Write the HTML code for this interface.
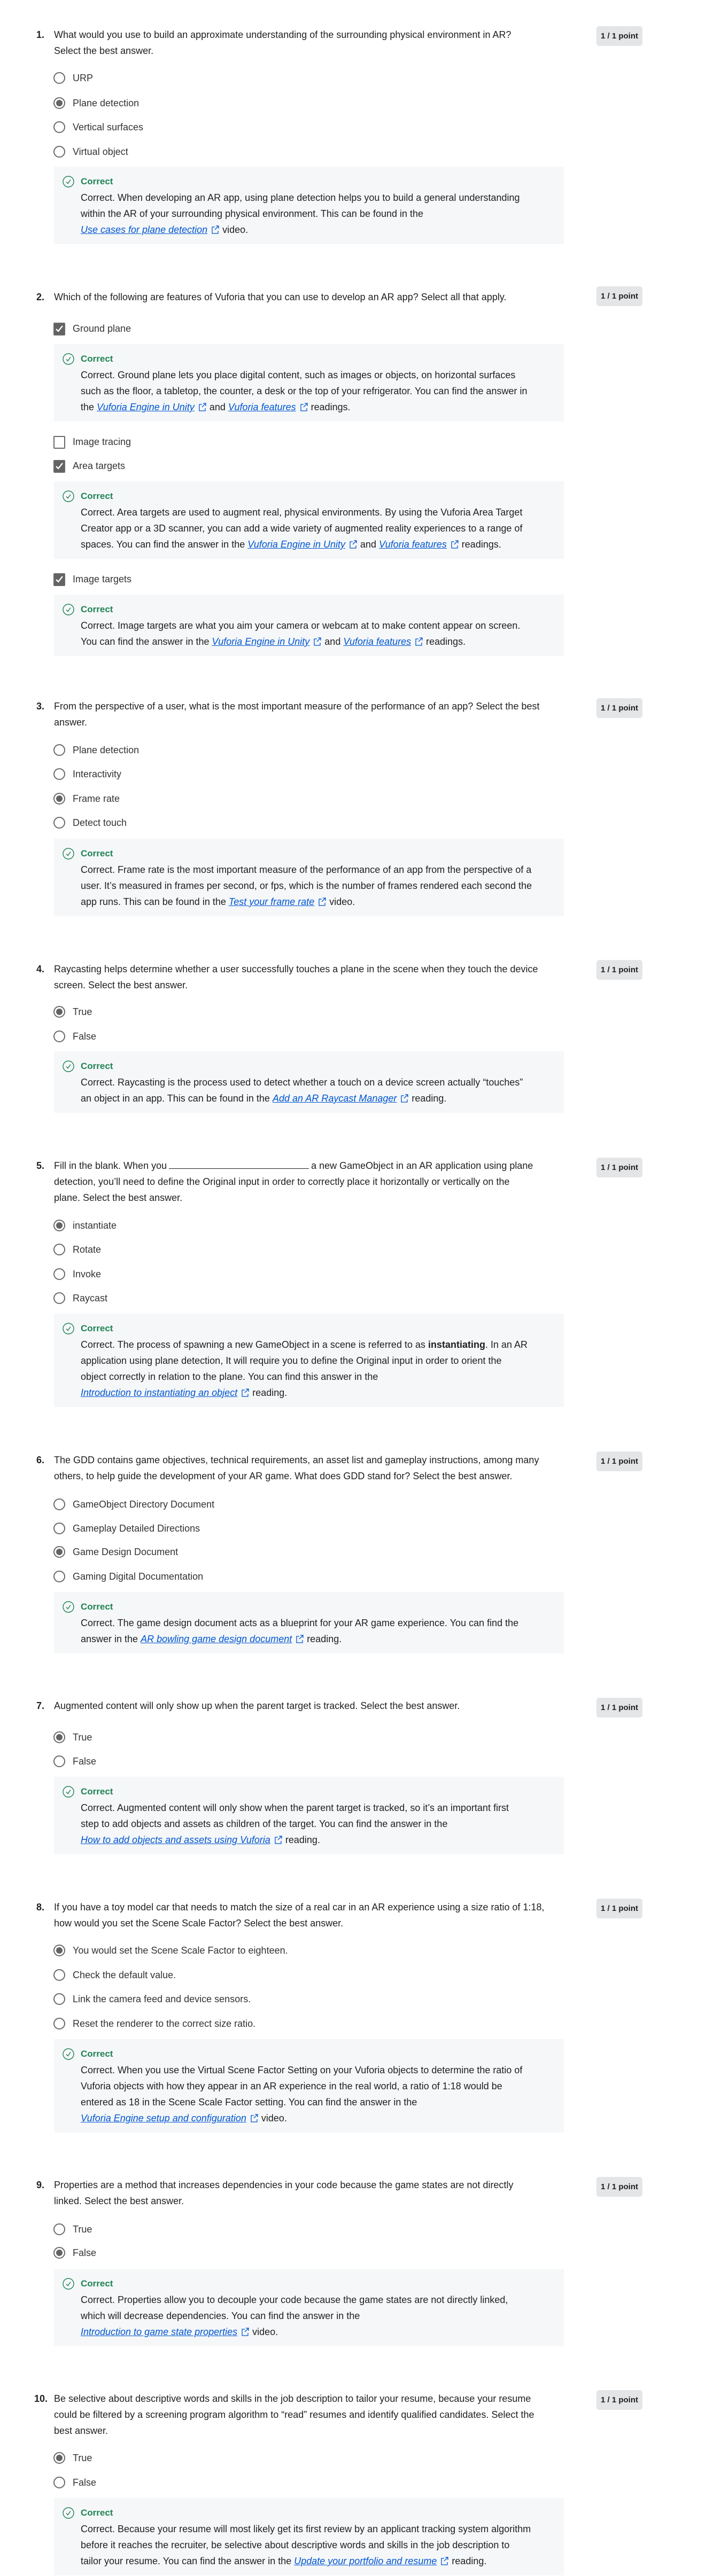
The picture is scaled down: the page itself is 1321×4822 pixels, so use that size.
<!DOCTYPE html>
<html><head><meta charset="utf-8"><style>
body{margin:0;width:1321px;height:4822px;position:relative;background:#fff;font-family:"Liberation Sans",sans-serif;color:#1f1f1f;font-size:18px;overflow:hidden}
.n{position:absolute;left:68px;font-weight:bold;line-height:30px;font-size:18px}
.q{position:absolute;left:101px;line-height:30px;white-space:nowrap;font-size:18px}
.b{position:absolute;left:1116px;width:86px;height:37px;background:#e3e5e7;border-radius:5px;font-weight:bold;font-size:15px;line-height:37px;text-align:center;color:#1f1f1f}
.o{position:absolute;left:100px;line-height:30px;padding-left:36px;white-space:nowrap;color:#333}
.r{position:absolute;left:0;top:4px;width:18px;height:18px;border:2px solid #6a6a6a;border-radius:50%;background:#fff}
.r.s::after{content:"";position:absolute;left:3px;top:3px;width:12px;height:12px;border-radius:50%;background:#636363}
.c{position:absolute;left:0;top:4px;width:18px;height:20px;border:2px solid #6a6a6a;border-radius:2px;background:#fff}
.c.s{background:#636363}
.c.s svg{position:absolute;left:1px;top:2px}
.fb{position:absolute;left:101px;width:904px;background:#f5f7f8;padding:13px 0 0 50px}
.ct{position:relative;color:#1f8354;font-weight:bold;font-size:17px;line-height:30px}
.ct svg{position:absolute;left:-34px;top:4px}
.ft{line-height:30px;white-space:nowrap;color:#1f1f1f}
a{color:#0056d2;font-style:italic;text-decoration:underline}
.x{display:inline-block;margin:0 6px 0 8px;vertical-align:-2px}
.blank{display:inline-block;width:262px;border-bottom:1px solid #1f1f1f;height:18px;margin:0 4px}
</style></head><body>

<!-- icons reused inline -->

<!-- Q1 -->
<div class="n" style="top:50px">1.</div>
<div class="q" style="top:50px">What would you use to build an approximate understanding of the surrounding physical environment in AR?<br>Select the best answer.</div>
<div class="b" style="top:49px">1 / 1 point</div>
<div class="o" style="top:131px"><i class="r"></i>URP</div>
<div class="o" style="top:178px"><i class="r s"></i>Plane detection</div>
<div class="o" style="top:223px"><i class="r"></i>Vertical surfaces</div>
<div class="o" style="top:269px"><i class="r"></i>Virtual object</div>
<div class="fb" style="top:312px;height:132px"><div class="ct"><svg width="22" height="22" viewBox="0 0 22 22"><circle cx="11" cy="11" r="10" fill="none" stroke="#1f8354" stroke-width="1.4"/><path d="M7 11.5l3 3 5-7" fill="none" stroke="#1f8354" stroke-width="1.4"/></svg>Correct</div><div class="ft">Correct. When developing an AR app, using plane detection helps you to build a general understanding<br>within the AR of your surrounding physical environment. This can be found in the<br><a>Use cases for plane detection</a><svg class="x" width="14" height="16" viewBox="0 0 14 16"><path d="M6 3H1v12h11v-5M8 1h5v5M13 1L6 8" fill="none" stroke="#0056d2" stroke-width="1.3"/></svg>video.</div></div>

<!-- Q2 -->
<div class="n" style="top:541px">2.</div>
<div class="q" style="top:541px">Which of the following are features of Vuforia that you can use to develop an AR app? Select all that apply.</div>
<div class="b" style="top:536px">1 / 1 point</div>
<div class="o" style="top:600px"><i class="c s"><svg width="16" height="16" viewBox="0 0 16 16"><path d="M2 8l4 4 8-10" fill="none" stroke="#fff" stroke-width="2.4"/></svg></i>Ground plane</div>
<div class="fb" style="top:644px;height:132px"><div class="ct"><svg width="22" height="22" viewBox="0 0 22 22"><circle cx="11" cy="11" r="10" fill="none" stroke="#1f8354" stroke-width="1.4"/><path d="M7 11.5l3 3 5-7" fill="none" stroke="#1f8354" stroke-width="1.4"/></svg>Correct</div><div class="ft">Correct. Ground plane lets you place digital content, such as images or objects, on horizontal surfaces<br>such as the floor, a tabletop, the counter, a desk or the top of your refrigerator. You can find the answer in<br>the <a>Vuforia Engine in Unity</a><svg class="x" width="14" height="16" viewBox="0 0 14 16"><path d="M6 3H1v12h11v-5M8 1h5v5M13 1L6 8" fill="none" stroke="#0056d2" stroke-width="1.3"/></svg>and <a>Vuforia features</a><svg class="x" width="14" height="16" viewBox="0 0 14 16"><path d="M6 3H1v12h11v-5M8 1h5v5M13 1L6 8" fill="none" stroke="#0056d2" stroke-width="1.3"/></svg>readings.</div></div>
<div class="o" style="top:812px"><i class="c"></i>Image tracing</div>
<div class="o" style="top:857px"><i class="c s"><svg width="16" height="16" viewBox="0 0 16 16"><path d="M2 8l4 4 8-10" fill="none" stroke="#fff" stroke-width="2.4"/></svg></i>Area targets</div>
<div class="fb" style="top:901px;height:132px"><div class="ct"><svg width="22" height="22" viewBox="0 0 22 22"><circle cx="11" cy="11" r="10" fill="none" stroke="#1f8354" stroke-width="1.4"/><path d="M7 11.5l3 3 5-7" fill="none" stroke="#1f8354" stroke-width="1.4"/></svg>Correct</div><div class="ft">Correct. Area targets are used to augment real, physical environments. By using the Vuforia Area Target<br>Creator app or a 3D scanner, you can add a wide variety of augmented reality experiences to a range of<br>spaces. You can find the answer in the <a>Vuforia Engine in Unity</a><svg class="x" width="14" height="16" viewBox="0 0 14 16"><path d="M6 3H1v12h11v-5M8 1h5v5M13 1L6 8" fill="none" stroke="#0056d2" stroke-width="1.3"/></svg>and <a>Vuforia features</a><svg class="x" width="14" height="16" viewBox="0 0 14 16"><path d="M6 3H1v12h11v-5M8 1h5v5M13 1L6 8" fill="none" stroke="#0056d2" stroke-width="1.3"/></svg>readings.</div></div>
<div class="o" style="top:1069px"><i class="c s"><svg width="16" height="16" viewBox="0 0 16 16"><path d="M2 8l4 4 8-10" fill="none" stroke="#fff" stroke-width="2.4"/></svg></i>Image targets</div>
<div class="fb" style="top:1113px;height:102px"><div class="ct"><svg width="22" height="22" viewBox="0 0 22 22"><circle cx="11" cy="11" r="10" fill="none" stroke="#1f8354" stroke-width="1.4"/><path d="M7 11.5l3 3 5-7" fill="none" stroke="#1f8354" stroke-width="1.4"/></svg>Correct</div><div class="ft">Correct. Image targets are what you aim your camera or webcam at to make content appear on screen.<br>You can find the answer in the <a>Vuforia Engine in Unity</a><svg class="x" width="14" height="16" viewBox="0 0 14 16"><path d="M6 3H1v12h11v-5M8 1h5v5M13 1L6 8" fill="none" stroke="#0056d2" stroke-width="1.3"/></svg>and <a>Vuforia features</a><svg class="x" width="14" height="16" viewBox="0 0 14 16"><path d="M6 3H1v12h11v-5M8 1h5v5M13 1L6 8" fill="none" stroke="#0056d2" stroke-width="1.3"/></svg>readings.</div></div>

<!-- Q3 -->
<div class="n" style="top:1307px">3.</div>
<div class="q" style="top:1307px">From the perspective of a user, what is the most important measure of the performance of an app? Select the best<br>answer.</div>
<div class="b" style="top:1307px">1 / 1 point</div>
<div class="o" style="top:1389px"><i class="r"></i>Plane detection</div>
<div class="o" style="top:1434px"><i class="r"></i>Interactivity</div>
<div class="o" style="top:1480px"><i class="r s"></i>Frame rate</div>
<div class="o" style="top:1525px"><i class="r"></i>Detect touch</div>
<div class="fb" style="top:1570px;height:132px"><div class="ct"><svg width="22" height="22" viewBox="0 0 22 22"><circle cx="11" cy="11" r="10" fill="none" stroke="#1f8354" stroke-width="1.4"/><path d="M7 11.5l3 3 5-7" fill="none" stroke="#1f8354" stroke-width="1.4"/></svg>Correct</div><div class="ft">Correct. Frame rate is the most important measure of the performance of an app from the perspective of a<br>user. It’s measured in frames per second, or fps, which is the number of frames rendered each second the<br>app runs. This can be found in the <a>Test your frame rate</a><svg class="x" width="14" height="16" viewBox="0 0 14 16"><path d="M6 3H1v12h11v-5M8 1h5v5M13 1L6 8" fill="none" stroke="#0056d2" stroke-width="1.3"/></svg>video.</div></div>

<!-- Q4 -->
<div class="n" style="top:1799px">4.</div>
<div class="q" style="top:1799px">Raycasting helps determine whether a user successfully touches a plane in the scene when they touch the device<br>screen. Select the best answer.</div>
<div class="b" style="top:1797px">1 / 1 point</div>
<div class="o" style="top:1879px"><i class="r s"></i>True</div>
<div class="o" style="top:1925px"><i class="r"></i>False</div>
<div class="fb" style="top:1968px;height:102px"><div class="ct"><svg width="22" height="22" viewBox="0 0 22 22"><circle cx="11" cy="11" r="10" fill="none" stroke="#1f8354" stroke-width="1.4"/><path d="M7 11.5l3 3 5-7" fill="none" stroke="#1f8354" stroke-width="1.4"/></svg>Correct</div><div class="ft">Correct. Raycasting is the process used to detect whether a touch on a device screen actually “touches”<br>an object in an app. This can be found in the <a>Add an AR Raycast Manager</a><svg class="x" width="14" height="16" viewBox="0 0 14 16"><path d="M6 3H1v12h11v-5M8 1h5v5M13 1L6 8" fill="none" stroke="#0056d2" stroke-width="1.3"/></svg>reading.</div></div>

<!-- Q5 -->
<div class="n" style="top:2167px">5.</div>
<div class="q" style="top:2167px">Fill in the blank. When you<span class="blank"></span>a new GameObject in an AR application using plane<br>detection, you’ll need to define the Original input in order to correctly place it horizontally or vertically on the<br>plane. Select the best answer.</div>
<div class="b" style="top:2167px">1 / 1 point</div>
<div class="o" style="top:2279px"><i class="r s"></i>instantiate</div>
<div class="o" style="top:2324px"><i class="r"></i>Rotate</div>
<div class="o" style="top:2370px"><i class="r"></i>Invoke</div>
<div class="o" style="top:2415px"><i class="r"></i>Raycast</div>
<div class="fb" style="top:2459px;height:162px"><div class="ct"><svg width="22" height="22" viewBox="0 0 22 22"><circle cx="11" cy="11" r="10" fill="none" stroke="#1f8354" stroke-width="1.4"/><path d="M7 11.5l3 3 5-7" fill="none" stroke="#1f8354" stroke-width="1.4"/></svg>Correct</div><div class="ft">Correct. The process of spawning a new GameObject in a scene is referred to as <b>instantiating</b>. In an AR<br>application using plane detection, It will require you to define the Original input in order to orient the<br>object correctly in relation to the plane. You can find this answer in the<br><a>Introduction to instantiating an object</a><svg class="x" width="14" height="16" viewBox="0 0 14 16"><path d="M6 3H1v12h11v-5M8 1h5v5M13 1L6 8" fill="none" stroke="#0056d2" stroke-width="1.3"/></svg>reading.</div></div>

<!-- Q6 -->
<div class="n" style="top:2718px">6.</div>
<div class="q" style="top:2718px">The GDD contains game objectives, technical requirements, an asset list and gameplay instructions, among many<br>others, to help guide the development of your AR game. What does GDD stand for? Select the best answer.</div>
<div class="b" style="top:2717px">1 / 1 point</div>
<div class="o" style="top:2801px"><i class="r"></i>GameObject Directory Document</div>
<div class="o" style="top:2846px"><i class="r"></i>Gameplay Detailed Directions</div>
<div class="o" style="top:2890px"><i class="r s"></i>Game Design Document</div>
<div class="o" style="top:2936px"><i class="r"></i>Gaming Digital Documentation</div>
<div class="fb" style="top:2980px;height:102px"><div class="ct"><svg width="22" height="22" viewBox="0 0 22 22"><circle cx="11" cy="11" r="10" fill="none" stroke="#1f8354" stroke-width="1.4"/><path d="M7 11.5l3 3 5-7" fill="none" stroke="#1f8354" stroke-width="1.4"/></svg>Correct</div><div class="ft">Correct. The game design document acts as a blueprint for your AR game experience. You can find the<br>answer in the <a>AR bowling game design document</a><svg class="x" width="14" height="16" viewBox="0 0 14 16"><path d="M6 3H1v12h11v-5M8 1h5v5M13 1L6 8" fill="none" stroke="#0056d2" stroke-width="1.3"/></svg>reading.</div></div>

<!-- Q7 -->
<div class="n" style="top:3178px">7.</div>
<div class="q" style="top:3178px">Augmented content will only show up when the parent target is tracked. Select the best answer.</div>
<div class="b" style="top:3178px">1 / 1 point</div>
<div class="o" style="top:3237px"><i class="r s"></i>True</div>
<div class="o" style="top:3282px"><i class="r"></i>False</div>
<div class="fb" style="top:3326px;height:132px"><div class="ct"><svg width="22" height="22" viewBox="0 0 22 22"><circle cx="11" cy="11" r="10" fill="none" stroke="#1f8354" stroke-width="1.4"/><path d="M7 11.5l3 3 5-7" fill="none" stroke="#1f8354" stroke-width="1.4"/></svg>Correct</div><div class="ft">Correct. Augmented content will only show when the parent target is tracked, so it’s an important first<br>step to add objects and assets as children of the target. You can find the answer in the<br><a>How to add objects and assets using Vuforia</a><svg class="x" width="14" height="16" viewBox="0 0 14 16"><path d="M6 3H1v12h11v-5M8 1h5v5M13 1L6 8" fill="none" stroke="#0056d2" stroke-width="1.3"/></svg>reading.</div></div>

<!-- Q8 -->
<div class="n" style="top:3555px">8.</div>
<div class="q" style="top:3555px">If you have a toy model car that needs to match the size of a real car in an AR experience using a size ratio of 1:18,<br>how would you set the Scene Scale Factor? Select the best answer.</div>
<div class="b" style="top:3554px">1 / 1 point</div>
<div class="o" style="top:3636px"><i class="r s"></i>You would set the Scene Scale Factor to eighteen.</div>
<div class="o" style="top:3682px"><i class="r"></i>Check the default value.</div>
<div class="o" style="top:3727px"><i class="r"></i>Link the camera feed and device sensors.</div>
<div class="o" style="top:3773px"><i class="r"></i>Reset the renderer to the correct size ratio.</div>
<div class="fb" style="top:3817px;height:162px"><div class="ct"><svg width="22" height="22" viewBox="0 0 22 22"><circle cx="11" cy="11" r="10" fill="none" stroke="#1f8354" stroke-width="1.4"/><path d="M7 11.5l3 3 5-7" fill="none" stroke="#1f8354" stroke-width="1.4"/></svg>Correct</div><div class="ft">Correct. When you use the Virtual Scene Factor Setting on your Vuforia objects to determine the ratio of<br>Vuforia objects with how they appear in an AR experience in the real world, a ratio of 1:18 would be<br>entered as 18 in the Scene Scale Factor setting. You can find the answer in the<br><a>Vuforia Engine setup and configuration</a><svg class="x" width="14" height="16" viewBox="0 0 14 16"><path d="M6 3H1v12h11v-5M8 1h5v5M13 1L6 8" fill="none" stroke="#0056d2" stroke-width="1.3"/></svg>video.</div></div>

<!-- Q9 -->
<div class="n" style="top:4075px">9.</div>
<div class="q" style="top:4075px">Properties are a method that increases dependencies in your code because the game states are not directly<br>linked. Select the best answer.</div>
<div class="b" style="top:4075px">1 / 1 point</div>
<div class="o" style="top:4158px"><i class="r"></i>True</div>
<div class="o" style="top:4202px"><i class="r s"></i>False</div>
<div class="fb" style="top:4247px;height:132px"><div class="ct"><svg width="22" height="22" viewBox="0 0 22 22"><circle cx="11" cy="11" r="10" fill="none" stroke="#1f8354" stroke-width="1.4"/><path d="M7 11.5l3 3 5-7" fill="none" stroke="#1f8354" stroke-width="1.4"/></svg>Correct</div><div class="ft">Correct. Properties allow you to decouple your code because the game states are not directly linked,<br>which will decrease dependencies. You can find the answer in the<br><a>Introduction to game state properties</a><svg class="x" width="14" height="16" viewBox="0 0 14 16"><path d="M6 3H1v12h11v-5M8 1h5v5M13 1L6 8" fill="none" stroke="#0056d2" stroke-width="1.3"/></svg>video.</div></div>

<!-- Q10 -->
<div class="n" style="top:4475px;left:64px">10.</div>
<div class="q" style="top:4475px">Be selective about descriptive words and skills in the job description to tailor your resume, because your resume<br>could be filtered by a screening program algorithm to “read” resumes and identify qualified candidates. Select the<br>best answer.</div>
<div class="b" style="top:4474px">1 / 1 point</div>
<div class="o" style="top:4586px"><i class="r s"></i>True</div>
<div class="o" style="top:4632px"><i class="r"></i>False</div>
<div class="fb" style="top:4676px;height:132px"><div class="ct"><svg width="22" height="22" viewBox="0 0 22 22"><circle cx="11" cy="11" r="10" fill="none" stroke="#1f8354" stroke-width="1.4"/><path d="M7 11.5l3 3 5-7" fill="none" stroke="#1f8354" stroke-width="1.4"/></svg>Correct</div><div class="ft">Correct. Because your resume will most likely get its first review by an applicant tracking system algorithm<br>before it reaches the recruiter, be selective about descriptive words and skills in the job description to<br>tailor your resume. You can find the answer in the <a>Update your portfolio and resume</a><svg class="x" width="14" height="16" viewBox="0 0 14 16"><path d="M6 3H1v12h11v-5M8 1h5v5M13 1L6 8" fill="none" stroke="#0056d2" stroke-width="1.3"/></svg>reading.</div></div>

</body></html>
